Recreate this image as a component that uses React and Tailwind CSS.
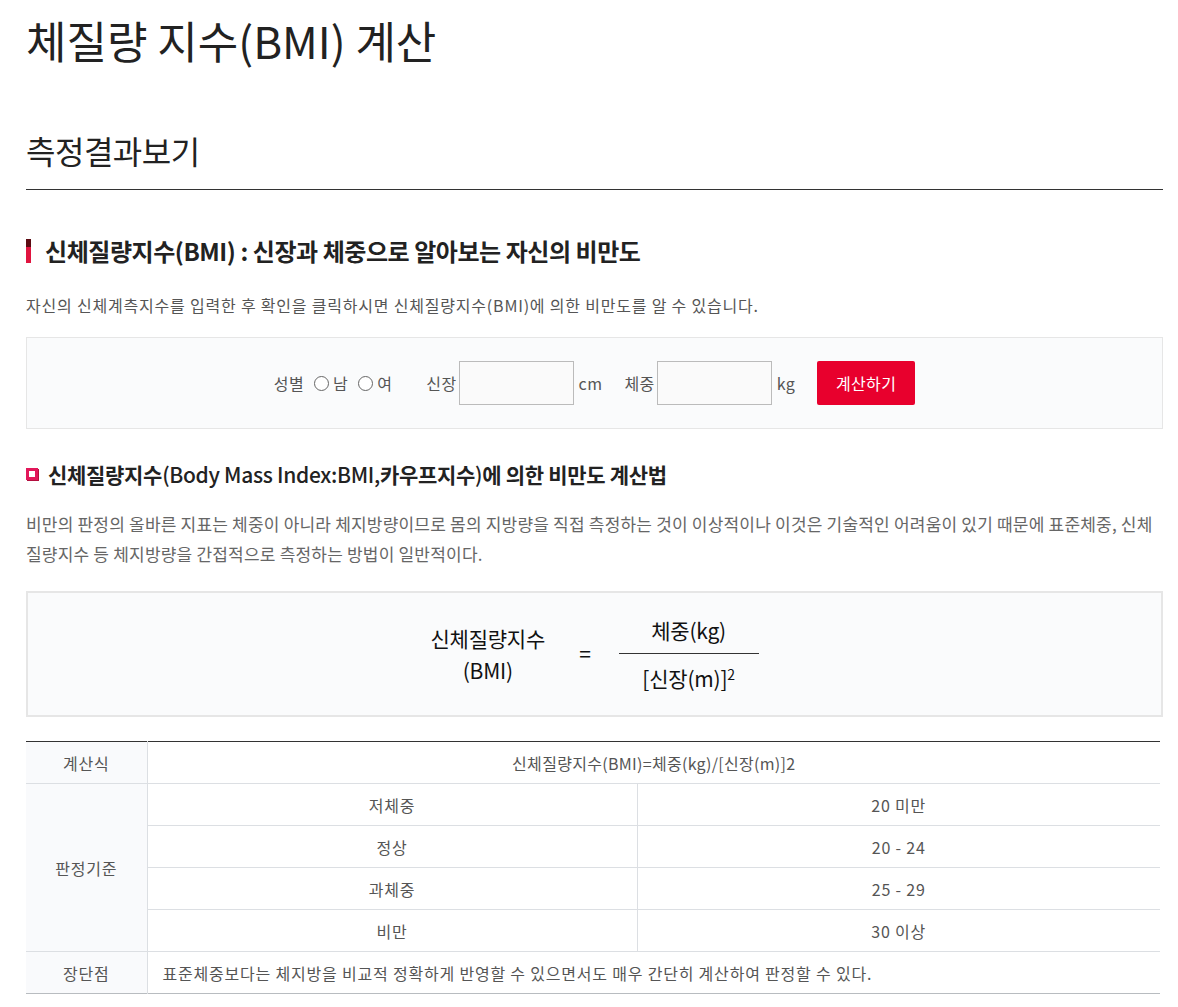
import React, { useState } from 'react';

const FONT = { fontFamily: '"Noto Sans CJK KR", "Noto Sans", sans-serif' };

function Radio({ label, checked, onClick }) {
  return (
    <label className="flex items-center gap-[4px] cursor-pointer" onClick={onClick}>
      <span className="w-[15px] h-[15px] rounded-full border border-[#666] bg-white flex items-center justify-center">
        {checked && <span className="w-[7px] h-[7px] rounded-full bg-[#333]" />}
      </span>
      <span>{label}</span>
    </label>
  );
}

const criteria = [
  ['저체중', '20 미만'],
  ['정상', '20 - 24'],
  ['과체중', '25 - 29'],
  ['비만', '30 이상'],
];

export default function App() {
  const [gender, setGender] = useState(null);

  return (
    <div className="bg-white min-h-screen pl-[26px] pr-[15px] pt-[14px] text-[#333]" style={FONT}>
      <h1 className="text-[44px] leading-[53px] text-[#222] tracking-[0px]">체질량 지수(BMI) 계산</h1>

      {/* 측정결과 header */}
      <div className="mt-[63px] pb-[19px] border-b border-[#333]">
        <h2 className="text-[32px] leading-[40px] text-[#222] tracking-[-0.5px]">측정결과보기</h2>
      </div>

      <div className="mt-[46px] flex items-center gap-[14px]">
        <span className="w-[5px] h-[24px] flex flex-col">
          <span className="h-[8px] bg-[#5b0b12]" />
          <span className="flex-1 bg-[#e0143f]" />
        </span>
        <h3 className="text-[24px] leading-[30px] font-bold text-[#222] tracking-[-0.45px]">
          신체질량지수(BMI) : 신장과 체중으로 알아보는 자신의 비만도
        </h3>
      </div>

      <p className="mt-[27px] text-[16px] leading-[24px] text-[#555] tracking-[0.8px]">
        자신의 신체계측지수를 입력한 후 확인을 클릭하시면 신체질량지수(BMI)에 의한 비만도를 알 수 있습니다.
      </p>

      {/* input form */}
      <div className="mt-[20px] h-[92px] border border-[#e6e6e6] bg-[#fafbfc] flex justify-center items-center text-[16px] text-[#555] tracking-[0.4px]">
        <span className="mr-[10px]">성별</span>
        <Radio label="남" checked={gender === 'm'} onClick={() => setGender('m')} />
        <span className="w-[10px]" />
        <Radio label="여" checked={gender === 'f'} onClick={() => setGender('f')} />
        <span className="ml-[34px] mr-[2px]">신장</span>
        <input className="w-[115px] h-[44px] border border-[#bbb] bg-[#fafafa] outline-none px-2" />
        <span className="ml-[5px]">cm</span>
        <span className="ml-[22px] mr-[2px]">체중</span>
        <input className="w-[115px] h-[44px] border border-[#bbb] bg-[#fafafa] outline-none px-2" />
        <span className="ml-[5px]">kg</span>
        <button className="ml-[22px] w-[98px] h-[44px] bg-[#e8002d] text-white rounded-[2px] text-[16px]">계산하기</button>
      </div>

      {/* formula heading */}
      <div className="mt-[31px] flex items-center gap-[10px]">
        <span className="w-[12px] h-[12px] border-[3px] border-[#e2175a] bg-white shadow-[1px_1px_0_#b30f3f]" />
        <h3 className="text-[21px] leading-[28px] font-bold text-[#222] tracking-[-0.3px]">
          신체질량지수<span className="font-medium">(Body Mass Index:BMI,</span>카우프지수<span className="font-medium">)</span>에 의한 비만도 계산법
        </h3>
      </div>

      <p className="mt-[21px] text-[17px] leading-[30px] text-[#666] tracking-[0.2px]">
        비만의 판정의 올바른 지표는 체중이 아니라 체지방량이므로 몸의 지방량을 직접 측정하는 것이 이상적이나 이것은 기술적인 어려움이 있기 때문에 표준체중, 신체질량지수 등 체지방량을 간접적으로 측정하는 방법이 일반적이다.
      </p>

      {/* formula box */}
      <div className="mt-[22px] border-2 border-[#e6e6e6] bg-[#fafbfc] h-[126px] flex items-center justify-center text-[21px] text-[#111] tracking-[-0.2px]">
        <div className="flex flex-col items-center leading-[32px]">
          <span>신체질량지수</span>
          <span>(BMI)</span>
        </div>
        <span className="ml-[34px] mr-[28px]">=</span>
        <div className="flex flex-col items-center w-[140px]">
          <span className="leading-[30px] pb-[8px]">체중(kg)</span>
          <span className="w-full h-px bg-[#333]" />
          <span className="leading-[30px] pt-[9px]">
            [신장(m)]<sup className="text-[14px]">2</sup>
          </span>
        </div>
      </div>

      {/* criteria table */}
      <table className="mt-[24px] w-[1134px] border-collapse border-t border-t-[#333] border-b border-b-[#b8bcc0] text-[16px] text-[#555] tracking-[0.8px]">
        <tbody>
          <tr className="h-[42px] border-b border-[#dcdfe3]">
            <th className="w-[121px] bg-[#f9fafc] font-normal border-r border-[#dcdfe3]">계산식</th>
            <td colSpan={2} className="text-center tracking-[0.3px]">신체질량지수(BMI)=체중(kg)/[신장(m)]2</td>
          </tr>
          {criteria.map(([label, value], i) => (
            <tr key={label} className="h-[42px] border-b border-[#dcdfe3]">
              {i === 0 && (
                <th rowSpan={4} className="bg-[#f9fafc] font-normal border-r border-[#dcdfe3]">판정기준</th>
              )}
              <td className="w-[490px] text-center border-r border-[#dcdfe3]">{label}</td>
              <td className="text-center">{value}</td>
            </tr>
          ))}
          <tr className="h-[42px]">
            <th className="bg-[#f9fafc] font-normal border-r border-[#dcdfe3]">장단점</th>
            <td colSpan={2} className="px-[15px] text-left">
              표준체중보다는 체지방을 비교적 정확하게 반영할 수 있으면서도 매우 간단히 계산하여 판정할 수 있다.
            </td>
          </tr>
        </tbody>
      </table>
    </div>
  );
}
